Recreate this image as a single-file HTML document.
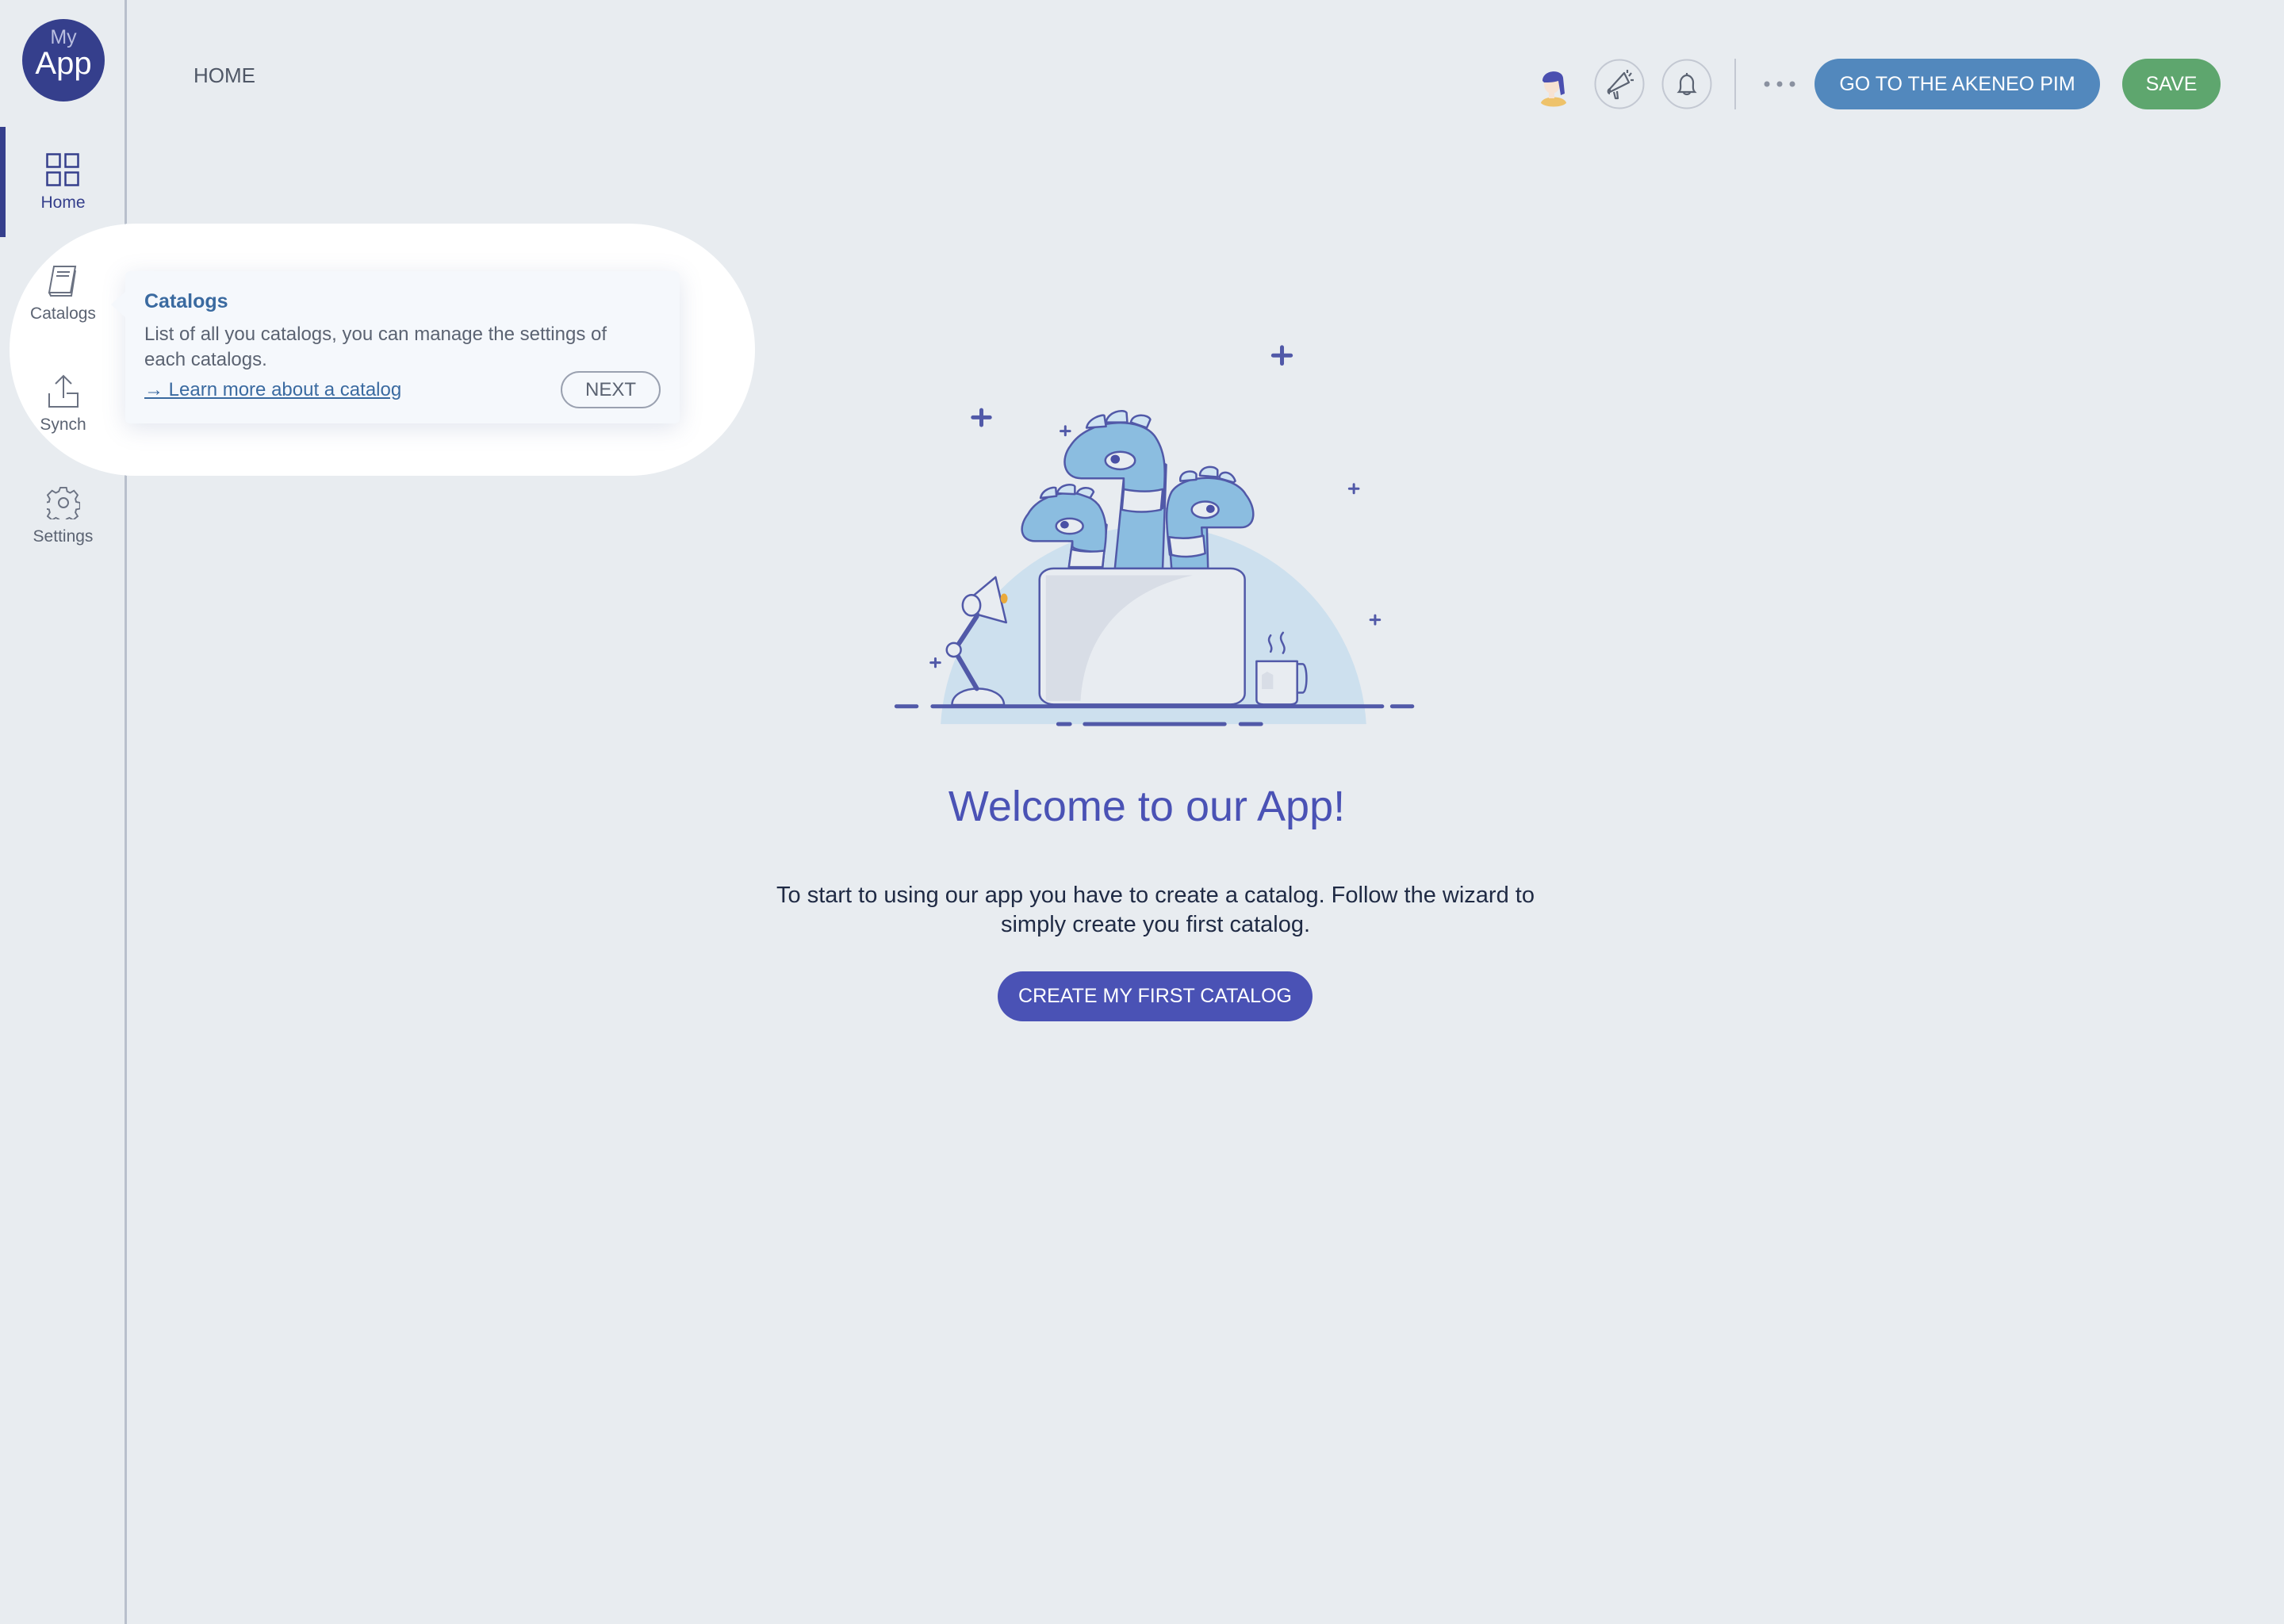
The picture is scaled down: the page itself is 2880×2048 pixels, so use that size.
<!DOCTYPE html>
<html><head><meta charset="utf-8">
<style>
*{margin:0;padding:0;box-sizing:border-box}
body{width:2880px;height:2048px;background:#e8ecf0;font-family:"Liberation Sans",sans-serif;position:relative;overflow:hidden}
.abs{position:absolute}
.side{left:0;top:0;width:159px;height:2048px;border-right:2px solid #b8bfcc}
.lbl{position:absolute;width:159px;text-align:center;font-size:21px;color:#5b6372}
.btn{position:absolute;border-radius:32px;color:#fff;font-size:25px;text-align:center}
</style></head><body>
<div class="abs side"></div>
<div class="abs" style="left:28px;top:24px;width:104px;height:104px;border-radius:50%;background:#353f8c;color:#fff;text-align:center">
 <div style="font-size:25px;margin-top:10px;color:#b9bee0;line-height:26px">My</div>
 <div style="font-size:40px;line-height:40px">App</div>
</div>
<div class="abs" style="left:0;top:160px;width:7px;height:139px;background:#353f8c"></div>
<div class="abs" style="left:244px;top:80px;font-size:26px;color:#4f5766">HOME</div>

<div class="abs" style="left:12px;top:282px;width:940px;height:318px;border-radius:159px;background:#fff"></div>
<div class="abs" style="left:158px;top:0;width:2px;height:282px;background:#b8bfcc"></div>
<div class="abs" style="left:158px;top:600px;width:2px;height:1448px;background:#b8bfcc"></div>

<svg class="abs" style="left:58px;top:193px" width="44" height="44" viewBox="0 0 44 44" fill="none" stroke="#353f8c" stroke-width="2.5"><rect x="1.5" y="1.5" width="16" height="16"/><rect x="24.5" y="1.5" width="16" height="16"/><rect x="1.5" y="24.5" width="16" height="16"/><rect x="24.5" y="24.5" width="16" height="16"/></svg>
<div class="lbl" style="top:244px;color:#353f8c">Home</div>
<svg class="abs" style="left:58px;top:334px" width="44" height="40" viewBox="0 0 44 40" fill="none" stroke="#6b7282" stroke-width="2"><path d="M10 2h27l-6 33H4z"/><path d="M4 35l2 4h26l5-32"/><path d="M14 9h16M13 14h16"/></svg>
<div class="lbl" style="top:384px">Catalogs</div>
<svg class="abs" style="left:60px;top:472px" width="40" height="44" viewBox="0 0 40 44" fill="none" stroke="#6b7282" stroke-width="2"><path d="M20 30V2M10 12l10-10 10 10"/><path d="M2 24v17h36V24H24"/></svg>
<div class="lbl" style="top:524px">Synch</div>
<svg class="abs" style="left:59px;top:613px" width="42" height="42" viewBox="0 0 42 42" fill="none" stroke="#6b7282" stroke-width="2"><path d="M17 2h8l1 5 4 2 5-3 5 6-3 5 1 4 5 1v8l-5 1-1 4 3 5-6 5-5-3-4 2-1 5h-8l-1-5-4-2-5 3-6-5 3-5-1-4-5-1v-8l5-1 1-4-3-5 6-6 5 3 4-2z" transform="scale(0.95) translate(1 0)"/><circle cx="21" cy="21" r="6"/></svg>
<div class="lbl" style="top:665px">Settings</div>

<div class="abs" style="left:158px;top:342px;width:699px;height:192px;background:#f5f8fc;border-radius:6px;box-shadow:0 6px 30px rgba(90,110,160,0.18)"></div>
<div class="abs" style="left:140px;top:366px;width:0;height:0;border-top:18px solid transparent;border-bottom:18px solid transparent;border-right:20px solid #f5f8fc"></div>
<div class="abs" style="left:182px;top:366px;font-size:25px;font-weight:bold;color:#3a6aa0">Catalogs</div>
<div class="abs" style="left:182px;top:406px;font-size:24px;line-height:32px;color:#5b6372;width:620px">List of all you catalogs, you can manage the settings of each catalogs.</div>
<div class="abs" style="left:182px;top:478px;font-size:24px;color:#3a6aa0;text-decoration:underline">→ Learn more about a catalog</div>
<div class="abs" style="left:707px;top:468px;width:126px;height:47px;border:2px solid #9aa1b0;border-radius:24px;font-size:24px;color:#5b6372;text-align:center;line-height:43px">NEXT</div>

<svg class="abs" style="left:1935px;top:80px" width="48" height="56" viewBox="0 0 48 56"><path d="M8 50c2-10 30-10 32 0-6 6-26 6-32 0z" fill="#eec26a"/><ellipse cx="22" cy="26" rx="10" ry="12" fill="#f7e2d2"/><path d="M10 22c0-14 24-16 26-4l2 20-5 2-3-18c-6 2-12 2-18 2z" fill="#4a4fb0"/><rect x="18" y="36" width="7" height="8" fill="#f7e2d2"/></svg>
<svg class="abs" style="left:2010px;top:74px" width="64" height="64" viewBox="0 0 64 64" fill="none"><circle cx="32" cy="32" r="30.5" stroke="#c3c8d2" stroke-width="2"/><g stroke="#5b6372" stroke-width="2.2" stroke-linejoin="round"><path d="M20 38l18-20 6 12-24 12z"/><path d="M20 38c-3 1-3 6 0 6"/><path d="M25 42l2 8h3l-1-9"/><path d="M44 22l3-4M46 27l4 0M42 18l0-4"/></g></svg>
<svg class="abs" style="left:2095px;top:74px" width="64" height="64" viewBox="0 0 64 64" fill="none"><circle cx="32" cy="32" r="30.5" stroke="#c3c8d2" stroke-width="2"/><g stroke="#5b6372" stroke-width="2.2"><path d="M22 42c3-3 2-8 2-12 0-5 4-9 8-9s8 4 8 9c0 4-1 9 2 12z"/><path d="M32 21v-3M28 42c0 4 8 4 8 0"/></g></svg>
<div class="abs" style="left:2187px;top:74px;width:2px;height:64px;background:#c3c8d2"></div>
<svg class="abs" style="left:2222px;top:100px" width="44" height="12"><circle cx="6" cy="6" r="3.5" fill="#8a91a0"/><circle cx="22" cy="6" r="3.5" fill="#8a91a0"/><circle cx="38" cy="6" r="3.5" fill="#8a91a0"/></svg>
<div class="btn" style="left:2288px;top:74px;width:360px;height:64px;line-height:64px;background:#5288bd">GO TO THE AKENEO PIM</div>
<div class="btn" style="left:2676px;top:74px;width:124px;height:64px;line-height:64px;background:#5ea66e">SAVE</div>

<svg class="abs" style="left:1100px;top:400px" width="700" height="540" viewBox="0 0 1568 1568" preserveAspectRatio="none">
<g stroke="#5159a8" stroke-linecap="round" stroke-linejoin="round">
<path d="M193 1490A602 770 0 0 1 1395 1490Z" fill="#cde0ee" stroke="none"/>
<path d="M690 590L710 590 685 920H820L830 540 700 460Z" fill="#8bbde0" vector-effect="non-scaling-stroke" stroke-width="2.5"/>
<path d="M555 820L565 820 555 920H650L662 760 560 700Z" fill="#8bbde0" vector-effect="non-scaling-stroke" stroke-width="2.5"/>
<path d="M930 770L945 770 948 920H845L832 700 930 700Z" fill="#8bbde0" vector-effect="non-scaling-stroke" stroke-width="2.5"/>
<path d="M710 590H590C540 590 530 520 560 470 610 370 760 360 800 440 830 500 830 560 820 700 760 720 720 700 710 630Z" fill="#8bbde0" vector-effect="non-scaling-stroke" stroke-width="2.5"/>
<path d="M565 820H460C420 820 410 770 440 720 480 630 600 620 640 690 665 740 662 800 655 860 600 860 570 850 565 840Z" fill="#8bbde0" vector-effect="non-scaling-stroke" stroke-width="2.5"/>
<path d="M930 770H1040C1085 770 1085 700 1055 650 1020 570 880 570 845 640 825 690 830 760 840 870 890 880 930 870 932 810Z" fill="#8bbde0" vector-effect="non-scaling-stroke" stroke-width="2.5"/>
<path d="M710 630C750 640 790 640 820 630L815 705C780 715 740 715 705 705Z" fill="#e8ecf1" vector-effect="non-scaling-stroke" stroke-width="2.5"/>
<path d="M562 850C590 860 625 860 655 855L650 915H555Z" fill="#e8ecf1" vector-effect="non-scaling-stroke" stroke-width="2.5"/>
<path d="M838 805C870 812 905 810 935 800L940 865C905 880 870 880 845 870Z" fill="#e8ecf1" vector-effect="non-scaling-stroke" stroke-width="2.5"/>
<g fill="#cfe3f2" stroke-width="2.5">
<path d="M605 405C610 370 650 355 655 360L660 400Z" vector-effect="non-scaling-stroke"/><path d="M660 385C665 345 710 335 718 350L720 385Z" vector-effect="non-scaling-stroke"/><path d="M730 385C735 350 780 355 785 375L775 405Z" vector-effect="non-scaling-stroke"/>
<path d="M475 662C480 630 510 620 518 625L520 655Z" vector-effect="non-scaling-stroke"/><path d="M522 645C528 610 568 608 572 620L572 648Z" vector-effect="non-scaling-stroke"/><path d="M578 645C585 618 620 620 625 640L615 662Z" vector-effect="non-scaling-stroke"/>
<path d="M870 600C865 565 905 555 915 575L915 595Z" vector-effect="non-scaling-stroke"/><path d="M925 580C925 545 965 540 975 560L975 585Z" vector-effect="non-scaling-stroke"/><path d="M980 590C980 560 1015 560 1025 600L1020 605Z" vector-effect="non-scaling-stroke"/>
</g>
<g fill="#e8ecf1" stroke-width="2.5"><ellipse cx="700" cy="525" rx="42" ry="32" vector-effect="non-scaling-stroke"/><ellipse cx="557" cy="765" rx="38" ry="28" vector-effect="non-scaling-stroke"/><ellipse cx="940" cy="705" rx="38" ry="30" vector-effect="non-scaling-stroke"/></g>
<g fill="#4a50a5" stroke="none"><ellipse cx="686" cy="520" rx="13" ry="16"/><ellipse cx="543" cy="760" rx="12" ry="14"/><ellipse cx="955" cy="702" rx="12" ry="15"/></g>
<rect x="472" y="920" width="580" height="498" rx="40" fill="#e8ecf1" vector-effect="non-scaling-stroke" stroke-width="2.5"/>
<path d="M490 945H905C720 1000 600 1150 588 1405H490Z" fill="#d8dde6" stroke="none"/>
<path d="M1085 1260H1200V1400C1200 1415 1190 1418 1180 1418H1105C1095 1418 1085 1415 1085 1400Z" fill="#e8ecf1" vector-effect="non-scaling-stroke" stroke-width="2.5"/>
<path d="M1200 1270H1215C1230 1270 1230 1375 1215 1375H1200" fill="none" vector-effect="non-scaling-stroke" stroke-width="2.5"/>
<path d="M1100 1310L1115 1298 1132 1310V1362H1100Z" fill="#d8dde6" stroke="none"/>
<path d="M1125 1165C1110 1190 1135 1200 1125 1225M1160 1155C1140 1185 1175 1200 1160 1230" fill="none" vector-effect="non-scaling-stroke" stroke-width="2.5"/>
<path d="M225 1420C225 1340 370 1340 372 1420Z" fill="#e8ecf1" vector-effect="non-scaling-stroke" stroke-width="2.5"/>
<path d="M295 1360L232 1220 295 1095" fill="none" vector-effect="non-scaling-stroke" stroke-width="6"/>
<ellipse cx="230" cy="1218" rx="20" ry="25" fill="#e8ecf1" vector-effect="non-scaling-stroke" stroke-width="2.5"/>
<path d="M285 1020L348 952 378 1118 300 1090Z" fill="#e8ecf1" vector-effect="non-scaling-stroke" stroke-width="2.5"/>
<ellipse cx="280" cy="1055" rx="25" ry="38" fill="#e8ecf1" vector-effect="non-scaling-stroke" stroke-width="2.5"/>
<ellipse cx="372" cy="1030" rx="10" ry="18" fill="#eaa93a" stroke="none"/>
<g fill="none" stroke-width="5">
<path d="M170 1425H1440M68 1425H125M1468 1425H1525M525 1490H558M600 1490H995M1040 1490H1098" vector-effect="non-scaling-stroke"/>
<path d="M1157 110V170M1132 140H1182M308 340V395M284 367H332" vector-effect="non-scaling-stroke"/>
</g>
<g fill="none" stroke-width="3">
<path d="M545 400V432M532 417H558M1360 612V644M1347 628H1373M1420 1092V1124M1407 1108H1433M178 1250V1280M165 1265H191" vector-effect="non-scaling-stroke"/>
</g>
</g>
</svg>

<div class="abs" style="left:946px;top:986px;width:1000px;text-align:center;font-size:54px;color:#4a52b5">Welcome to our App!</div>
<div class="abs" style="left:907px;top:1111px;width:1100px;text-align:center;font-size:29px;line-height:37px;color:#1f2a44">To start to using our app you have to create a catalog. Follow the wizard to<br>simply create you first catalog.</div>
<div class="btn" style="left:1258px;top:1225px;width:397px;height:63px;line-height:63px;background:#4a52b5">CREATE MY FIRST CATALOG</div>
</body></html>
